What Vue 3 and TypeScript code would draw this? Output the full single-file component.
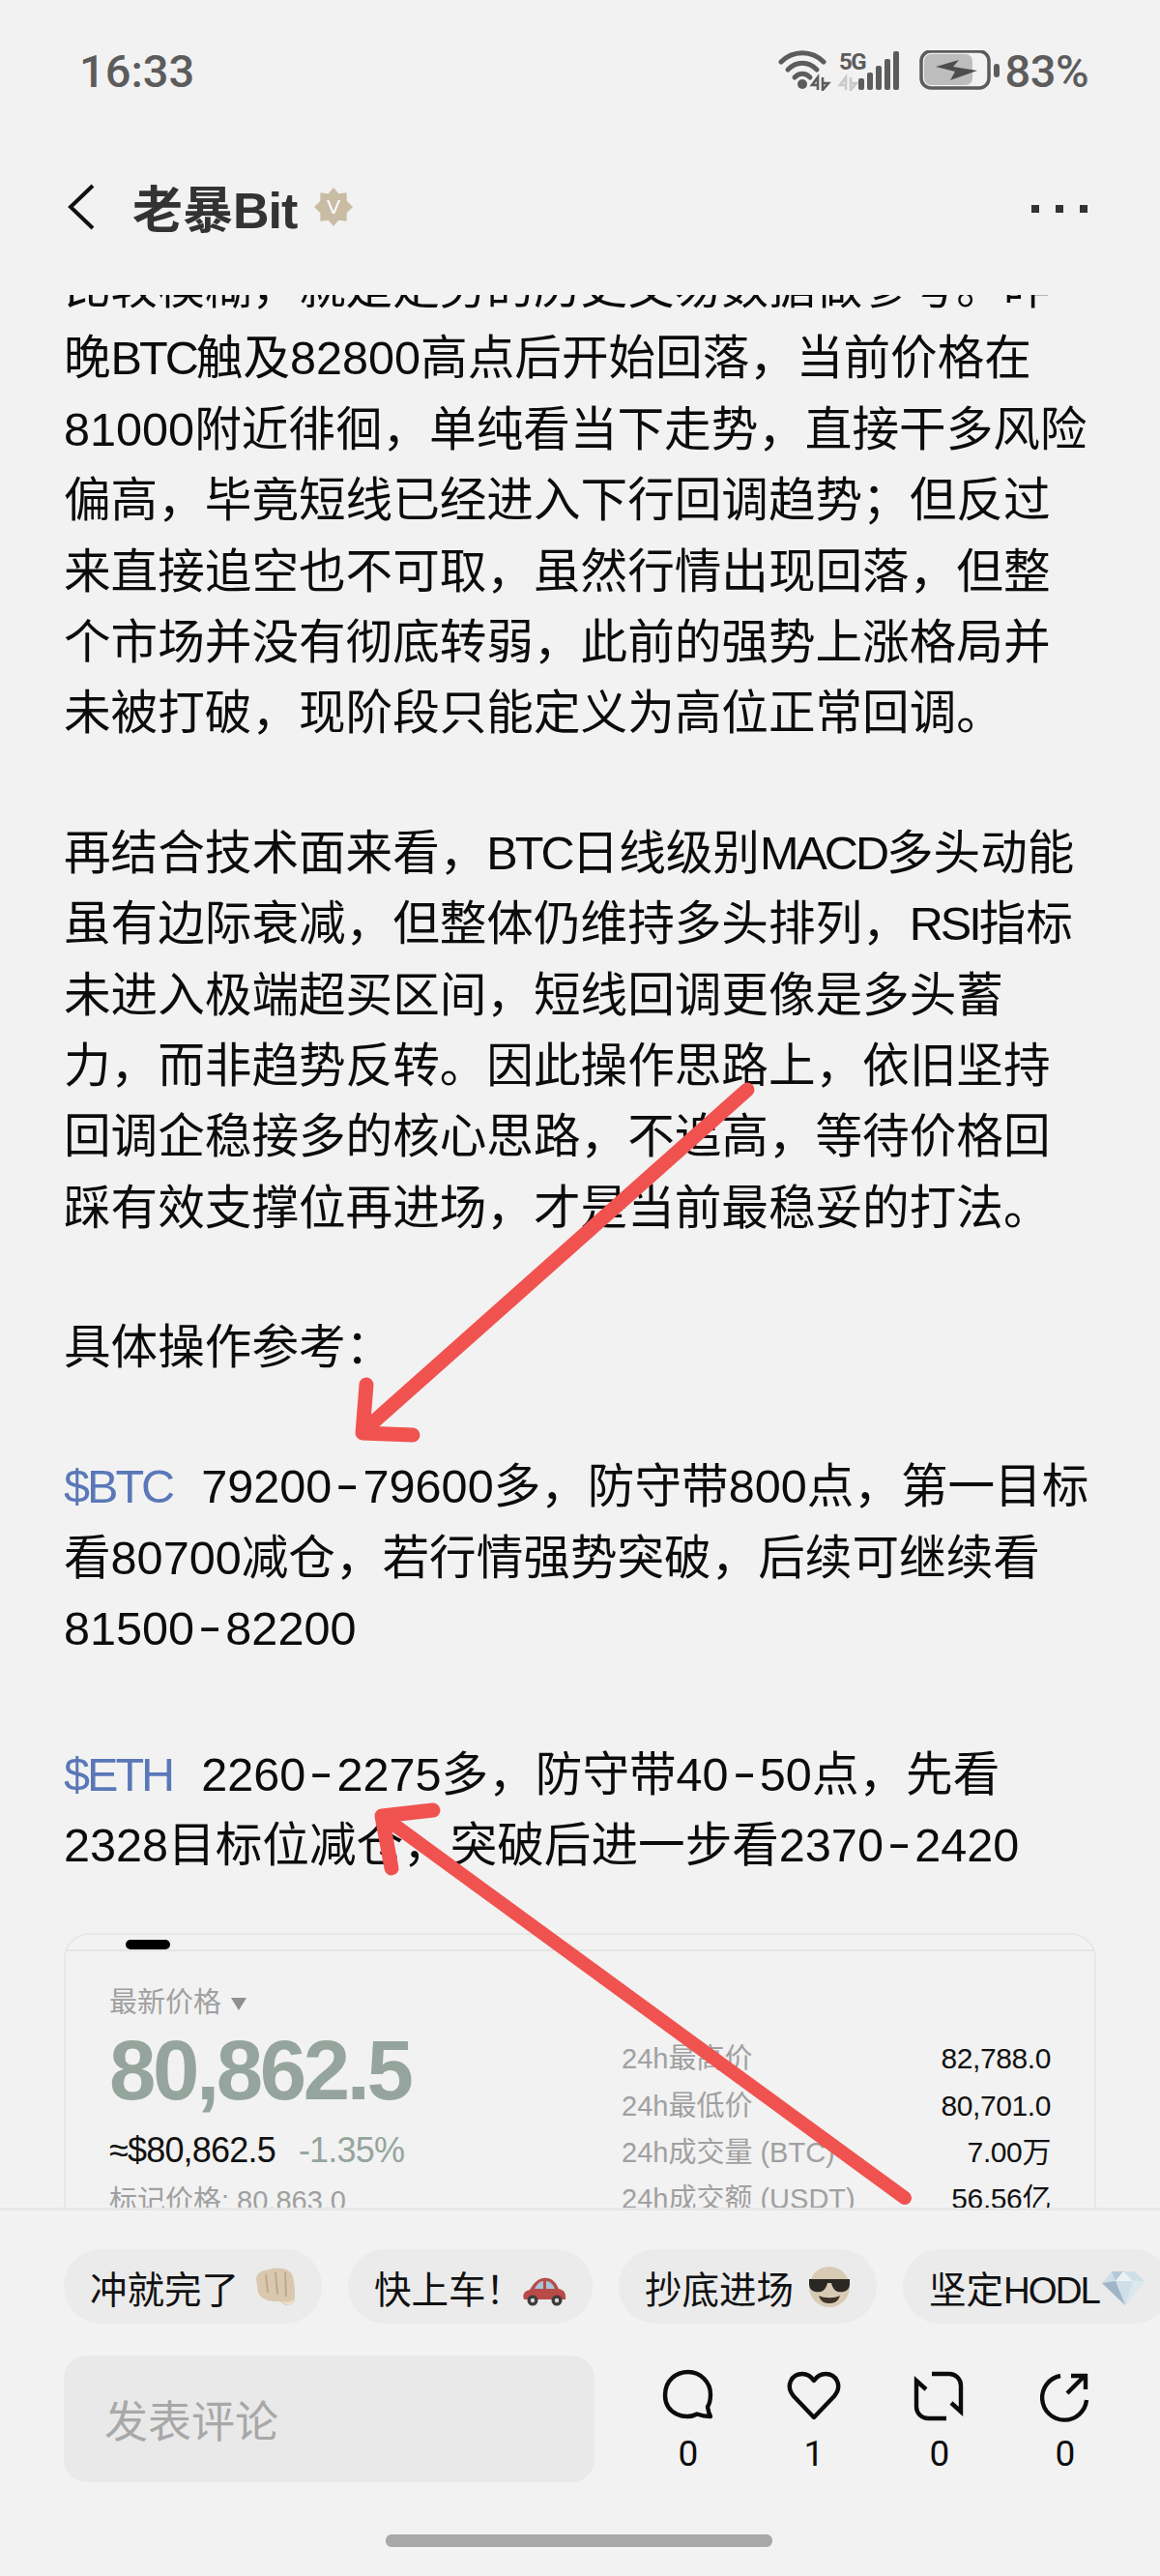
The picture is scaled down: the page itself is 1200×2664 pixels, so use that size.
<script setup lang="ts">
type Para = { tag?: string; lines: string[] };
type Token = { text: string; cls: string };

const paragraphs: Para[] = [
  {
    lines: [
      "比较模糊，就是走势的历史交易数据做参考。昨",
      "晚BTC触及82800高点后开始回落，当前价格在",
      "81000附近徘徊，单纯看当下走势，直接干多风险",
      "偏高，毕竟短线已经进入下行回调趋势；但反过",
      "来直接追空也不可取，虽然行情出现回落，但整",
      "个市场并没有彻底转弱，此前的强势上涨格局并",
      "未被打破，现阶段只能定义为高位正常回调。",
    ],
  },
  {
    lines: [
      "再结合技术面来看，BTC日线级别MACD多头动能",
      "虽有边际衰减，但整体仍维持多头排列，RSI指标",
      "未进入极端超买区间，短线回调更像是多头蓄",
      "力，而非趋势反转。因此操作思路上，依旧坚持",
      "回调企稳接多的核心思路，不追高，等待价格回",
      "踩有效支撑位再进场，才是当前最稳妥的打法。",
    ],
  },
  { lines: ["具体操作参考："] },
  {
    tag: "$BTC",
    lines: [
      "79200-79600多，防守带800点，第一目标",
      "看80700减仓，若行情强势突破，后续可继续看",
      "81500-82200",
    ],
  },
  {
    tag: "$ETH",
    lines: ["2260-2275多，防守带40-50点，先看", "2328目标位减仓，突破后进一步看2370-2420"],
  },
];

// capitals run narrow and hyphens run wide in the reference's font
const tokens = (line: string): Token[] =>
  line
    .split(/([A-Z$]+|-)/)
    .filter(Boolean)
    .map((text) => ({
      text,
      cls: text === "-" ? "hy" : /^[A-Z$]+$/.test(text) ? "caps" : "",
    }));

const stats = [
  { label: "24h最高价", value: "82,788.0" },
  { label: "24h最低价", value: "80,701.0" },
  { label: "24h成交量 (BTC)", value: "7.00万" },
  { label: "24h成交额 (USDT)", value: "56.56亿" },
];

const counts = [0, 1, 0, 0];
</script>

<template>
  <div class="phone">
    <div class="status">
      <span class="time">16:33</span>
      <div class="status-right">
        <svg class="sys" width="220" height="42" viewBox="0 0 220 42">
          <g fill="none" stroke="#5c5c5c" stroke-width="5" stroke-linecap="round">
            <path d="M3 12 C15 -0.5 35 -0.5 47 12" />
            <path d="M10 20 C19 11 31 11 40 20" />
            <path d="M17 28 C22 23 28 23 33 28" />
          </g>
          <circle cx="25" cy="35" r="5" fill="#5c5c5c" />
          <path d="M41 41 V28 L35 36 H41 M46 28 V41 L52 34 H46" fill="none" stroke="#5c5c5c" stroke-width="2.6" />
          <text x="63" y="20" class="five-g">5G</text>
          <path d="M70 41 V28 L64 36 H70 M75 28 V41 L81 34 H75" fill="none" stroke="#c9c9c9" stroke-width="2.6" />
          <g fill="#5c5c5c">
            <rect x="83" y="29" width="6" height="12" rx="2" />
            <rect x="92" y="23" width="6" height="18" rx="2" />
            <rect x="101" y="16" width="6" height="25" rx="2" />
            <rect x="110" y="9" width="6" height="32" rx="2" />
            <rect x="119" y="1" width="6" height="40" rx="2" />
          </g>
          <rect x="148" y="1" width="70" height="38" rx="10" fill="none" stroke="#5c5c5c" stroke-width="3.5" />
          <rect x="151" y="4" width="50" height="32" rx="7" fill="#bdbdbd" />
          <path d="M163 17 L187 10 L181 17 L206 21 L178 31 L183 22 Z" fill="#4d4d4d" />
        </svg>
        <span class="batt-tip"></span>
        <span class="percent">83%</span>
      </div>
    </div>

    <div class="nav">
      <svg class="back" width="30" height="50" viewBox="0 0 30 50">
        <path d="M27 3 L4 25 L27 47" fill="none" stroke="#111" stroke-width="4" />
      </svg>
      <span class="title">老暴<span class="title-latin">Bit</span></span>
      <svg class="badge" width="40" height="40" viewBox="0 0 38 38">
        <polygon
          points="19,0 24,6 32,5 32,13 38,19 32,25 32,33 24,32 19,38 14,32 6,33 6,25 0,19 6,13 6,5 14,6"
          fill="#c9bca5"
        />
        <text x="19" y="26" text-anchor="middle" class="badge-v">V</text>
      </svg>
      <div class="dots"><i></i><i></i><i></i></div>
    </div>

    <main class="scroll">
      <div class="content">
        <section v-for="(p, i) in paragraphs" :key="i" class="para">
          <div v-for="(line, j) in p.lines" :key="j" class="line">
            <span v-if="p.tag && j === 0" class="tag caps">{{ p.tag }}</span>
            <span v-for="(t, k) in tokens(line)" :key="k" :class="t.cls">{{ t.text }}</span>
          </div>
        </section>

        <div class="card">
          <div class="card-tabs"><span class="tab-mark"></span></div>
          <div class="card-body">
            <div class="card-left">
              <div class="price-label">最新价格 <span class="caret"></span></div>
              <div class="price">80,862.5</div>
              <div class="approx">≈$80,862.5<span class="change">-1.35%</span></div>
              <div class="mark">标记价格: 80,863.0</div>
            </div>
            <div class="card-right">
              <div v-for="s in stats" :key="s.label" class="stat">
                <span class="stat-label">{{ s.label }}</span>
                <span class="stat-value">{{ s.value }}</span>
              </div>
            </div>
          </div>
        </div>
      </div>
    </main>

    <!-- hand drawn arrows on top of the screenshot -->
    <svg class="arrows" width="1200" height="2664" viewBox="0 0 1200 2664">
      <g fill="none" stroke="#f0534f" stroke-width="15" stroke-linecap="round" stroke-linejoin="round">
        <path d="M773 1127 L378 1478" />
        <path d="M379 1432 L375 1482 L427 1484" />
        <path d="M936 2273 L398 1880" stroke-width="14" />
        <path d="M448 1872 L395 1878 L405 1932" />
      </g>
    </svg>

    <footer class="bottom">
      <div class="chips">
        <div class="chip">
          冲就完了
          <svg width="44" height="40" viewBox="0 0 44 40">
            <path d="M3 12 C3 5 10 3 16 2 C24 0 36 0 40 7 C43 14 43 24 43 31 C43 37 38 40 33 39 L28 35 C18 36 8 33 5 26 Z" fill="#d9c8ae" />
            <path d="M13 7 L15 26 M23 5 L25 28 M33 5 L34 30" stroke="#bfa98c" stroke-width="2" fill="none" />
            <path d="M30 34 C33 36 37 37 41 33 V36 C38 40 33 40 30 34 Z" fill="#efe0cb" />
          </svg>
        </div>
        <div class="chip">
          快上车！
          <svg class="car" width="46" height="30" viewBox="0 0 46 30">
            <path d="M2 23 C0 17 3 14 8 13 C12 7 15 2 22 1 C29 0 34 3 38 12 C43 13 46 16 45 23 Z" fill="#b84a48" />
            <path d="M13 12 C15 8 18 4 22 4 V12 Z M25 4 C29 4 32 7 34 12 H25 Z" fill="#a9c4d6" />
            <circle cx="11" cy="24" r="5.5" fill="#3c3c3c" />
            <circle cx="36" cy="24" r="5.5" fill="#3c3c3c" />
            <circle cx="11" cy="24" r="2.2" fill="#ddd" />
            <circle cx="36" cy="24" r="2.2" fill="#ddd" />
          </svg>
        </div>
        <div class="chip">
          抄底进场
          <svg width="44" height="42" viewBox="0 0 44 42">
            <circle cx="22" cy="21" r="21" fill="#d8cbb4" />
            <path d="M1 13 H43 V18 C43 25 37 27 31 26 C27 25 25 21 24 17 H20 C19 21 17 25 13 26 C7 27 1 25 1 18 Z" fill="#2a2823" />
            <path d="M11 30 C16 33 28 33 33 30 C31 37 26 38 22 38 C18 38 13 37 11 30 Z" fill="#3d3328" />
          </svg>
        </div>
        <div class="chip chip-tight">
          <span>坚定<span class="caps">HODL</span></span>
          <svg width="44" height="38" viewBox="0 0 44 38">
            <path d="M10 3 H34 L44 13 L24 38 L0 15 Z" fill="#cfdfe7" />
            <path d="M0 15 L14 13 L24 38 Z" fill="#9fb4c4" />
            <path d="M10 3 L14 13 L22 3 Z" fill="#b6c9d6" />
            <path d="M24 38 L32 13 L44 13 Z" fill="#dbe8ee" />
            <path d="M14 13 L22 3 L32 13 Z" fill="#eaf2f5" />
          </svg>
        </div>
      </div>

      <div class="actions-row">
        <div class="input">发表评论</div>
        <div class="actions">
          <div v-for="(count, i) in counts" :key="i" class="action">
            <svg width="58" height="56" viewBox="0 0 58 56" class="act-icon" fill="none" stroke="#0c0c0c" stroke-width="4.4">
              <path
                v-if="i === 0"
                d="M38 47.5 C27 54 5 48 5 28 C5 13 16 4 29 4 C42 4 52 15 52 27 C52 33 51 37 49 40 C49.5 44 51 48 52 50 C47 50 42 49 38 47.5 Z"
                stroke-linejoin="round"
              />
              <path
                v-else-if="i === 1"
                d="M29 51 L8 29 C-1 18 6 6 17 6 C23 6 27 10 29 13 C31 10 35 6 41 6 C52 6 59 18 50 29 Z"
                stroke-linejoin="round"
              />
              <template v-else-if="i === 2">
                <path d="M21 6 H39 A12 12 0 0 1 51 18 V45 L41 36" />
                <path d="M36 52 H17 A12 12 0 0 1 5 40 V13 L15 22" />
              </template>
              <template v-else>
                <path d="M24 8 A23 23 0 1 0 51 33" />
                <path d="M31 26 L49 8 M35 8 H50 V22" />
              </template>
            </svg>
            <span class="count">{{ count }}</span>
          </div>
        </div>
      </div>

      <div class="home-bar"></div>
    </footer>
  </div>
</template>

<style>
html,
body {
  margin: 0;
  background: #f2f2f2;
}
</style>

<style scoped>
.phone {
  position: relative;
  width: 1200px;
  height: 2664px;
  display: flex;
  flex-direction: column;
  overflow: hidden;
  background: #f2f2f2;
  color: #0c0c0c;
  font-family: "Liberation Sans", "Noto Sans CJK SC", sans-serif;
}

.status {
  flex: none;
  height: 150px;
  box-sizing: border-box;
  padding: 0 74px 4px 82px;
  display: flex;
  align-items: center;
  justify-content: space-between;
}

.time,
.percent {
  font-family: Roboto, sans-serif;
  font-size: 47px;
  font-weight: 500;
  color: #5c5c5c;
}

.status-right {
  display: flex;
  align-items: center;
}

.five-g {
  font-family: Roboto, sans-serif;
  font-size: 24px;
  font-weight: 700;
  fill: #5c5c5c;
  letter-spacing: -1.5px;
}

.batt-tip {
  width: 6px;
  height: 14px;
  margin-left: 3px;
  background: #5c5c5c;
  border-radius: 3px;
}

.percent {
  margin-left: 5px;
  letter-spacing: -0.5px;
}

.nav {
  flex: none;
  height: 155px;
  box-sizing: border-box;
  padding: 0 75px 28px 69px;
  display: flex;
  align-items: center;
}

.back {
  flex: none;
}

.title {
  margin-left: 38px;
  font-size: 52px;
  font-weight: 700;
  color: #333;
}

.title-latin {
  letter-spacing: -1px;
}

.badge {
  margin-left: 18px;
}

.badge-v {
  font-size: 20px;
  fill: #fff;
}

.dots {
  margin-left: auto;
  margin-top: 4px;
  display: flex;
  gap: 17px;
}

.dots i {
  width: 8px;
  height: 8px;
  background: #333;
}

.scroll {
  flex: 1;
  min-height: 0;
  overflow: hidden;
}

.content {
  margin-top: -44px;
  padding: 0 66px;
}

.para {
  margin-bottom: 71px;
}

.para:nth-child(4) {
  margin-bottom: 77px;
}

.line {
  height: 73.4px;
  line-height: 73.4px;
  font-size: 48.6px;
  white-space: nowrap;
}

.caps {
  letter-spacing: -3px;
}

.hy {
  display: inline-block;
  margin: 0 8px;
  transform: translateY(-3px) scaleX(1.5);
}

.tag {
  color: #5a78b8;
  margin-right: 30px;
}

.card {
  margin-top: -17px;
  height: 400px;
  box-sizing: border-box;
  border: 2px solid #e8e8e8;
  border-radius: 26px 26px 0 0;
}

.card-tabs {
  position: relative;
  height: 15px;
  border-bottom: 2px solid #e4e4e4;
}

.tab-mark {
  position: absolute;
  left: 62px;
  top: 5px;
  width: 46px;
  height: 10px;
  border-radius: 5px;
  background: #000;
}

.card-body {
  display: flex;
  justify-content: space-between;
  padding: 0 45px;
}

.card-left {
  padding-top: 33px;
}

.price-label {
  height: 40px;
  line-height: 40px;
  font-size: 29px;
  color: #a0a0a0;
}

.caret {
  display: inline-block;
  margin-left: 2px;
  border: 8px solid transparent;
  border-top: 13px solid #8f8f8f;
  border-bottom: 0;
  vertical-align: 2px;
}

.price {
  height: 100px;
  line-height: 100px;
  font-size: 87px;
  font-weight: 700;
  letter-spacing: -3.4px;
  color: #95a59e;
}

.approx {
  margin-top: 3px;
  height: 60px;
  line-height: 60px;
  font-size: 36px;
  letter-spacing: -0.8px;
  color: #111;
}

.change {
  margin-left: 24px;
  color: #95a59e;
}

.mark {
  margin-top: 2px;
  height: 40px;
  line-height: 40px;
  font-size: 29px;
  color: #a0a0a0;
}

.card-right {
  width: 444px;
  padding-top: 87px;
}

.stat {
  height: 48.3px;
  line-height: 48.3px;
  display: flex;
  justify-content: space-between;
  font-size: 29px;
}

.stat-label {
  color: #a0a0a0;
}

.stat-value {
  font-size: 30px;
  color: #111;
  letter-spacing: -0.4px;
}

.arrows {
  position: absolute;
  left: 0;
  top: 0;
  pointer-events: none;
}

.bottom {
  position: relative;
  flex: none;
  height: 381px;
  box-sizing: border-box;
  border-top: 3px solid #e7e7e7;
  background: #f2f2f2;
  padding: 40px 0 0 66px;
  overflow: hidden;
}

.chips {
  display: flex;
  gap: 27px;
}

.chip {
  flex: none;
  height: 77px;
  box-sizing: border-box;
  padding: 0 27px;
  display: flex;
  align-items: center;
  gap: 15px;
  border-radius: 38px;
  background: #ebebeb;
  font-size: 38.5px;
  color: #111;
}

.chip-tight {
  gap: 3px;
}

.chip .caps {
  letter-spacing: -2px;
}

.car {
  margin-top: 10px;
  margin-left: -16px;
}

.actions-row {
  margin-top: 33px;
  display: flex;
}

.input {
  width: 549px;
  height: 131px;
  box-sizing: border-box;
  padding-left: 42px;
  display: flex;
  align-items: center;
  border-radius: 24px;
  background: #e9e9e9;
  font-size: 45px;
  color: #a8a8a8;
}

.actions {
  margin-left: 32px;
  width: 520px;
  display: flex;
}

.action {
  width: 130px;
  padding-top: 13px;
  display: flex;
  flex-direction: column;
  align-items: center;
}

.count {
  margin-top: 13px;
  font-family: Roboto, sans-serif;
  font-size: 37px;
  line-height: 40px;
}

.home-bar {
  position: absolute;
  left: 399px;
  top: 335px;
  width: 400px;
  height: 13px;
  border-radius: 6px;
  background: #a8a8a9;
}
</style>
